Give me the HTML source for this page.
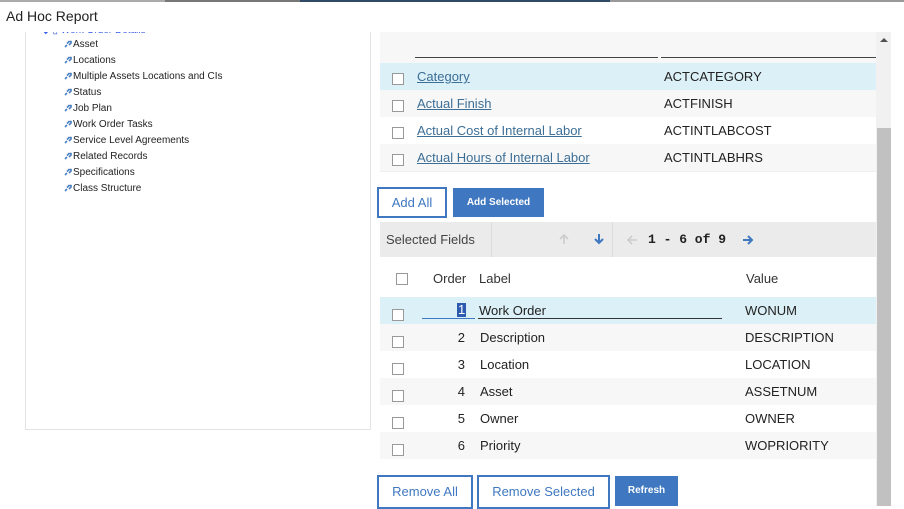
<!DOCTYPE html>
<html><head><style>
*{margin:0;padding:0;box-sizing:border-box}
body{width:904px;height:506px;overflow:hidden;background:#fff;font-family:"Liberation Sans",sans-serif;color:#222;position:relative}
.a{position:absolute}
.topline{top:0;height:2px}
.title{left:6px;top:8px;font-size:14px;color:#222}
.tree{left:25px;top:32px;width:346px;height:398px;border:1px solid #e3e3e3;border-top:none;overflow:hidden}
.ti{position:absolute;left:38px;font-size:10px;color:#222;white-space:nowrap}
.ti svg{vertical-align:-1px;margin-right:1px}
.row{position:absolute;left:380px;width:496px;height:27px;font-size:13px}
.cb{position:absolute;left:12px;top:10px;width:12px;height:12px;border:1px solid #999;background:#fff}
.lk{position:absolute;left:37px;top:6px;color:#3c6e96;text-decoration:underline}
.v1{position:absolute;left:284px;top:6px;color:#222}
.n{position:absolute;left:60px;width:25px;text-align:right;top:6px}
.lb{position:absolute;left:100px;top:6px}
.v2{position:absolute;left:365px;top:6px}
.btn{position:absolute;font-size:13px;border:2px solid #3f78c0;color:#3f78c0;background:#fff;text-align:center}
.pb{position:absolute;background:#3f78c0;color:#fff;font-size:10px;font-weight:bold;text-align:center}
</style></head><body>
<div class="a topline" style="left:0;width:165px;background:#aaa"></div>
<div class="a topline" style="left:165px;width:135px;background:#777"></div>
<div class="a topline" style="left:300px;width:310px;background:#2f4a66"></div>
<div class="a topline" style="left:610px;width:294px;background:#999"></div>
<div class="a title">Ad Hoc Report</div>

<div class="a tree">
  <div class="a" style="left:16px;top:-7px;font-size:10px;color:#3b5ee8;white-space:nowrap">◆ ▯ Work Order Details</div>
  <div class="ti" style="top:7px"><svg width="8" height="8" viewBox="0 0 8 8"><path d="M1 7L3 5M3 3.5L5 1.5H7V3L5 5" stroke="#4a7fc1" stroke-width="1.6" fill="none"/></svg>Asset</div>
  <div class="ti" style="top:23px"><svg width="8" height="8" viewBox="0 0 8 8"><path d="M1 7L3 5M3 3.5L5 1.5H7V3L5 5" stroke="#4a7fc1" stroke-width="1.6" fill="none"/></svg>Locations</div>
  <div class="ti" style="top:39px"><svg width="8" height="8" viewBox="0 0 8 8"><path d="M1 7L3 5M3 3.5L5 1.5H7V3L5 5" stroke="#4a7fc1" stroke-width="1.6" fill="none"/></svg>Multiple Assets Locations and CIs</div>
  <div class="ti" style="top:55px"><svg width="8" height="8" viewBox="0 0 8 8"><path d="M1 7L3 5M3 3.5L5 1.5H7V3L5 5" stroke="#4a7fc1" stroke-width="1.6" fill="none"/></svg>Status</div>
  <div class="ti" style="top:71px"><svg width="8" height="8" viewBox="0 0 8 8"><path d="M1 7L3 5M3 3.5L5 1.5H7V3L5 5" stroke="#4a7fc1" stroke-width="1.6" fill="none"/></svg>Job Plan</div>
  <div class="ti" style="top:87px"><svg width="8" height="8" viewBox="0 0 8 8"><path d="M1 7L3 5M3 3.5L5 1.5H7V3L5 5" stroke="#4a7fc1" stroke-width="1.6" fill="none"/></svg>Work Order Tasks</div>
  <div class="ti" style="top:103px"><svg width="8" height="8" viewBox="0 0 8 8"><path d="M1 7L3 5M3 3.5L5 1.5H7V3L5 5" stroke="#4a7fc1" stroke-width="1.6" fill="none"/></svg>Service Level Agreements</div>
  <div class="ti" style="top:119px"><svg width="8" height="8" viewBox="0 0 8 8"><path d="M1 7L3 5M3 3.5L5 1.5H7V3L5 5" stroke="#4a7fc1" stroke-width="1.6" fill="none"/></svg>Related Records</div>
  <div class="ti" style="top:135px"><svg width="8" height="8" viewBox="0 0 8 8"><path d="M1 7L3 5M3 3.5L5 1.5H7V3L5 5" stroke="#4a7fc1" stroke-width="1.6" fill="none"/></svg>Specifications</div>
  <div class="ti" style="top:151px"><svg width="8" height="8" viewBox="0 0 8 8"><path d="M1 7L3 5M3 3.5L5 1.5H7V3L5 5" stroke="#4a7fc1" stroke-width="1.6" fill="none"/></svg>Class Structure</div>
</div>

<div class="a" style="left:380px;top:32px;width:496px;height:31px;background:#f7f7f7"></div>
<div class="a" style="left:415px;top:57px;width:243px;height:1px;background:#444"></div>
<div class="a" style="left:661px;top:57px;width:215px;height:1px;background:#444"></div>
<div class="row" style="top:63px;background:#dcf0f7"><div class="cb"></div><span class="lk">Category</span><span class="v1">ACTCATEGORY</span></div>
<div class="row" style="top:90px;background:#f7f7f7"><div class="cb"></div><span class="lk">Actual Finish</span><span class="v1">ACTFINISH</span></div>
<div class="row" style="top:117px;background:#fff"><div class="cb"></div><span class="lk">Actual Cost of Internal Labor</span><span class="v1">ACTINTLABCOST</span></div>
<div class="row" style="top:144px;background:#f7f7f7"><div class="cb"></div><span class="lk">Actual Hours of Internal Labor</span><span class="v1">ACTINTLABHRS</span></div>

<div class="a" style="left:380px;top:171px;width:496px;height:1px;background:#f0f0f0"></div>
<div class="btn" style="left:377px;top:187px;width:70px;height:31px;line-height:28px">Add All</div>
<div class="pb" style="left:453px;top:188px;width:91px;height:29px;line-height:29px">Add Selected</div>

<div class="a" style="left:380px;top:222px;width:496px;height:35px;background:#ebebeb"></div>
<div class="a" style="left:491px;top:222px;width:1px;height:35px;background:#ddd"></div>
<div class="a" style="left:612px;top:222px;width:1px;height:35px;background:#ddd"></div>
<div class="a" style="left:386px;top:232px;font-size:13px;color:#444">Selected Fields</div>
<svg class="a" style="left:558px;top:233px" width="12" height="12" viewBox="0 0 12 12"><path d="M6 11V2M2 6L6 2L10 6" stroke="#ccc" stroke-width="1.6" fill="none"/></svg>
<svg class="a" style="left:593px;top:233px" width="12" height="12" viewBox="0 0 12 12"><path d="M6 1V10M2 6L6 10L10 6" stroke="#3f78c0" stroke-width="2" fill="none"/></svg>
<svg class="a" style="left:626px;top:234px" width="12" height="12" viewBox="0 0 12 12"><path d="M11 6H2M6 2L2 6L6 10" stroke="#ccc" stroke-width="1.6" fill="none"/></svg>
<div class="a" style="left:648px;top:232px;font-size:13px;font-family:'Liberation Mono',monospace;font-weight:bold;color:#222">1 - 6 of 9</div>
<svg class="a" style="left:742px;top:234px" width="12" height="12" viewBox="0 0 12 12"><path d="M1 6H10M6 2L10 6L6 10" stroke="#3f78c0" stroke-width="2" fill="none"/></svg>

<div class="row" style="top:262px;height:35px;background:#fff"><div class="cb" style="left:16px;top:11px"></div><span class="a" style="left:53px;top:9px;font-size:13px;color:#333">Order</span><span class="a" style="left:99px;top:9px;font-size:13px;color:#333">Label</span><span class="a" style="left:366px;top:9px;font-size:13px;color:#333">Value</span></div>
<div class="row" style="top:297px;background:#dcf0f7"><div class="cb" style="top:12px"></div>
  <div class="a" style="left:42px;top:21px;width:53px;height:1px;background:#3f78c0"></div>
  <span class="a" style="left:77px;top:6px;background:#2d5bb0;color:#fff;font-size:13px;line-height:14px;padding:0 1px">1</span>
  <span class="lb" style="left:99px">Work Order</span>
  <div class="a" style="left:98px;top:21px;width:244px;height:1px;background:#333"></div>
  <span class="v2">WONUM</span></div>
<div class="row" style="top:324px;background:#f7f7f7"><div class="cb" style="top:12px"></div><span class="n">2</span><span class="lb">Description</span><span class="v2">DESCRIPTION</span></div>
<div class="row" style="top:351px;background:#fff"><div class="cb" style="top:12px"></div><span class="n">3</span><span class="lb">Location</span><span class="v2">LOCATION</span></div>
<div class="row" style="top:378px;background:#f7f7f7"><div class="cb" style="top:12px"></div><span class="n">4</span><span class="lb">Asset</span><span class="v2">ASSETNUM</span></div>
<div class="row" style="top:405px;background:#fff"><div class="cb" style="top:12px"></div><span class="n">5</span><span class="lb">Owner</span><span class="v2">OWNER</span></div>
<div class="row" style="top:432px;background:#f7f7f7"><div class="cb" style="top:12px"></div><span class="n">6</span><span class="lb">Priority</span><span class="v2">WOPRIORITY</span></div>

<div class="btn" style="left:377px;top:475px;width:96px;height:34px;line-height:29px">Remove All</div>
<div class="btn" style="left:477px;top:475px;width:133px;height:34px;line-height:29px">Remove Selected</div>
<div class="pb" style="left:615px;top:476px;width:63px;height:30px;line-height:30px">Refresh</div>

<div class="a" style="left:876px;top:32px;width:15px;height:474px;background:#f1f1f1"></div>
<div class="a" style="left:877px;top:128px;width:14px;height:378px;background:#c1c1c1"></div>
<div class="a" style="left:880px;top:38px;width:0;height:0;border-left:4px solid transparent;border-right:4px solid transparent;border-bottom:4px solid #505050"></div>
</body></html>
